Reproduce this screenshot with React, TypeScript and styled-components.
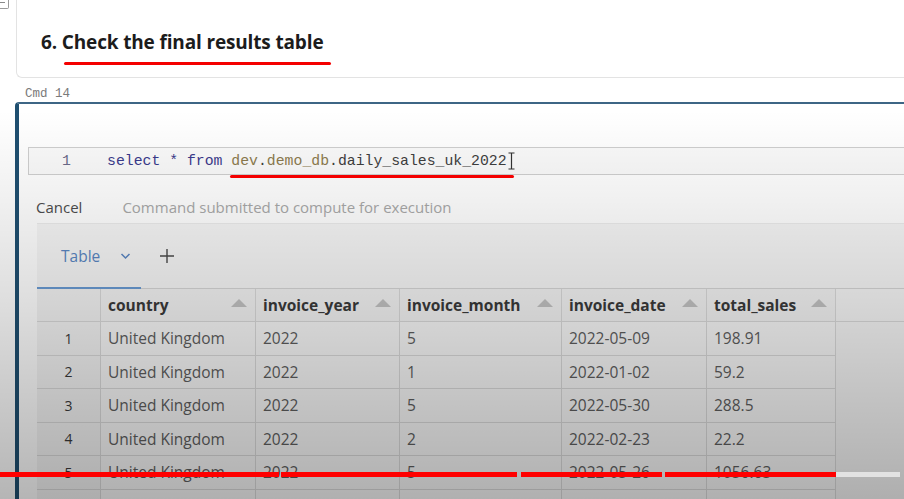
import React from "react";
import styled, { createGlobalStyle } from "styled-components";

const Global = createGlobalStyle`
  html, body { margin: 0; padding: 0; background: #ffffff; }
  body { width: 904px; height: 499px; overflow: hidden; font-family: "Open Sans", "Noto Sans", sans-serif; }
`;

const Page = styled.div`
  position: relative;
  width: 904px;
  height: 499px;
  overflow: hidden;
  background: #ffffff;
`;

const TopRow = styled.div`
  display: flex;
  height: 78px;
`;

const Gutter = styled.div`
  width: 16px;
  flex: none;
`;

const CollapseBox = styled.div`
  margin-top: -5px;
  width: 8px;
  height: 12px;
  border: 1px solid #9a9a9a;
  border-left: none;
  border-radius: 0 2px 2px 0;
  display: flex;
  align-items: center;
  &::after {
    content: "";
    display: block;
    width: 5px;
    height: 1px;
    background: #8a8a8a;
  }
`;

const MarkdownCell = styled.div`
  flex: 1;
  border: 1px solid #e3e3e3;
  border-top: none;
  border-right: none;
  border-bottom-left-radius: 6px;
  padding: 29px 0 0 24px;
`;

const Heading = styled.h2`
  margin: 0;
  font-family: "Open Sans", sans-serif;
  font-weight: 700;
  font-size: 19px;
  letter-spacing: -0.15px;
  color: #1c1c1c;
`;

const CmdLabel = styled.div`
  height: 24px;
  padding-left: 25px;
  display: flex;
  align-items: flex-end;
  padding-bottom: 1px;
  box-sizing: border-box;
  font-family: "Liberation Mono", monospace;
  font-size: 12.5px;
  color: #7a7a7a;
`;

const CommandCell = styled.div`
  margin-left: 15px;
  border-left: 4px solid #1f4f70;
  border-top: 2px solid #3d6685;
  border-top-left-radius: 4px;
  height: 420px;
  display: flex;
  flex-direction: column;
`;

const Spacer = styled.div<{ h: number }>`
  height: ${(p) => p.h}px;
  flex: none;
`;

const CodeBox = styled.div`
  margin-left: 9px;
  height: 26px;
  border: 1px solid #cfcfcf;
  border-right: none;
  background: #fafafa;
  display: flex;
  align-items: center;
  font-family: "Liberation Mono", monospace;
  font-size: 14.8px;
`;

const LineNo = styled.span`
  width: 78px;
  text-align: right;
  padding-right: 36px;
  box-sizing: border-box;
  color: #6b6b8a;
  flex: none;
`;

const Kw = styled.span`
  color: #3a3a8c;
`;
const Ident = styled.span<{ tone?: "db" | "plain" }>`
  color: ${(p) => (p.tone === "db" ? "#8c7a4e" : "#3e3e3e")};
`;

const Cursor = styled.span`
  margin-left: 1px;
  display: flex;
  align-items: center;
`;

const StatusRow = styled.div`
  height: 48px;
  display: flex;
  align-items: flex-end;
  padding: 0 0 6px 17px;
  box-sizing: border-box;
  gap: 40px;
  font-family: "Open Sans", sans-serif;
  font-size: 15px;
`;

const Cancel = styled.span`
  color: #4d4d4d;
`;
const StatusText = styled.span`
  color: #a9a9a9;
`;

const Results = styled.div`
  margin-left: 18px;
  flex: 1;
  background: #f6f6f6;
  border-top: 1px solid #ececec;
  display: flex;
  flex-direction: column;
`;

const TabBar = styled.div`
  height: 64px;
  flex: none;
  display: flex;
  align-items: flex-end;
  border-bottom: 1px solid #d6d6d6;
`;

const Tab = styled.div`
  width: 104px;
  height: 64px;
  box-sizing: border-box;
  border-bottom: 2px solid #6a9bd3;
  margin-bottom: -1px;
  display: flex;
  align-items: center;
  padding-left: 24px;
  gap: 20px;
  font-family: "Open Sans", sans-serif;
  font-size: 15.5px;
  color: #5a86c2;
`;

const PlusBtn = styled.div`
  height: 64px;
  display: flex;
  align-items: center;
  padding-left: 19px;
`;

const Grid = styled.div`
  display: grid;
  grid-template-columns: 64px 155px 144px 162px 145px 129px 1fr;
  font-family: "Open Sans", sans-serif;
  font-size: 15.5px;
`;

const HeadCell = styled.div<{ last?: boolean }>`
  height: 33px;
  box-sizing: border-box;
  border-right: ${(p) => (p.last ? "none" : "1px solid #dadada")};
  border-bottom: 1px solid #dadada;
  background: ${(p) => (p.last ? "transparent" : "#f3f3f3")};
  display: flex;
  align-items: center;
  justify-content: space-between;
  padding: 0 8px 0 7px;
  font-weight: 700;
  color: #3a3a3a;
`;

const SortArrow = styled.span`
  width: 0;
  height: 0;
  border-left: 8px solid transparent;
  border-right: 8px solid transparent;
  border-bottom: 8px solid #c2c2c2;
  margin-top: -4px;
`;

const Cell = styled.div<{ idx?: boolean; last?: boolean }>`
  height: 33.5px;
  box-sizing: border-box;
  border-right: ${(p) => (p.last ? "none" : "1px solid #dadada")};
  border-bottom: ${(p) => (p.last ? "none" : "1px solid #dadada")};
  background: ${(p) => (p.last ? "transparent" : p.idx ? "#f4f4f4" : "#f8f8f8")};
  display: flex;
  align-items: center;
  justify-content: ${(p) => (p.idx ? "center" : "flex-start")};
  padding-left: ${(p) => (p.idx ? "0" : "7px")};
  color: ${(p) => (p.idx ? "#3a3a3a" : "#5e5e5e")};
  font-size: ${(p) => (p.idx ? "14px" : "15.5px")};
`;

const Shade = styled.div`
  position: absolute;
  inset: 0;
  pointer-events: none;
  background: linear-gradient(
    to bottom,
    rgba(0, 0, 0, 0) 0px,
    rgba(0, 0, 0, 0) 110px,
    rgba(0, 0, 0, 0.06) 200px,
    rgba(0, 0, 0, 0.13) 300px,
    rgba(0, 0, 0, 0.21) 400px,
    rgba(0, 0, 0, 0.29) 499px
  );
`;

const Ink = styled.div<{ x: number; y: number; w: number; t: number }>`
  position: absolute;
  left: ${(p) => p.x}px;
  top: ${(p) => p.y}px;
  width: ${(p) => p.w}px;
  height: ${(p) => p.t}px;
  background: #f40000;
  border-radius: 2px;
`;

const Progress = styled.div`
  position: absolute;
  left: 0;
  right: 0;
  top: 472px;
  height: 5px;
  display: flex;
`;

const ProgSeg = styled.div<{ w: number; played?: boolean }>`
  width: ${(p) => p.w}px;
  flex: none;
  height: 100%;
  background: ${(p) => (p.played ? "#ff0000" : "#e2e2e2")};
`;

const ProgGap = styled.div<{ w: number }>`
  width: ${(p) => p.w}px;
  flex: none;
`;

const cols = ["country", "invoice_year", "invoice_month", "invoice_date", "total_sales"];
const rows = [
  ["United Kingdom", "2022", "5", "2022-05-09", "198.91"],
  ["United Kingdom", "2022", "1", "2022-01-02", "59.2"],
  ["United Kingdom", "2022", "5", "2022-05-30", "288.5"],
  ["United Kingdom", "2022", "2", "2022-02-23", "22.2"],
  ["United Kingdom", "2022", "5", "2022-05-26", "1056.63"],
  ["", "", "", "", ""],
];

export default function App() {
  return (
    <Page>
      <Global />
      <TopRow>
        <Gutter>
          <CollapseBox />
        </Gutter>
        <MarkdownCell>
          <Heading>6. Check the final results table</Heading>
        </MarkdownCell>
      </TopRow>
      <CmdLabel>Cmd 14</CmdLabel>
      <CommandCell>
        <Spacer h={43} />
        <CodeBox>
          <LineNo>1</LineNo>
          <Kw>select * from&nbsp;</Kw>
          <Ident tone="db">dev</Ident>
          <Ident>.</Ident>
          <Ident tone="db">demo_db</Ident>
          <Ident>.daily_sales_uk_2022</Ident>
          <Cursor>
            <svg width="7" height="18" viewBox="0 0 7 18">
              <path d="M0.5 1 H6.5 M3.5 1 V17 M0.5 17 H6.5" fill="none" stroke="#333" strokeWidth="1.2" />
            </svg>
          </Cursor>
        </CodeBox>
        <StatusRow>
          <Cancel>Cancel</Cancel>
          <StatusText>Command submitted to compute for execution</StatusText>
        </StatusRow>
        <Results>
          <TabBar>
            <Tab>
              Table
              <svg width="11" height="8" viewBox="0 0 11 8">
                <path d="M1.5 2 L5.5 6 L9.5 2" fill="none" stroke="#5a86c2" strokeWidth="1.5" />
              </svg>
            </Tab>
            <PlusBtn>
              <svg width="14" height="14" viewBox="0 0 14 14">
                <path d="M7 0 V14 M0 7 H14" stroke="#4a4a4a" strokeWidth="1.4" />
              </svg>
            </PlusBtn>
          </TabBar>
          <Grid>
            <HeadCell />
            {cols.map((c) => (
              <HeadCell key={c}>
                {c}
                <SortArrow />
              </HeadCell>
            ))}
            <HeadCell last />
            {rows.map((r, i) => (
              <React.Fragment key={i}>
                <Cell idx>{r[0] ? i + 1 : ""}</Cell>
                {r.map((v, j) => (
                  <Cell key={j}>{v}</Cell>
                ))}
                <Cell last />
              </React.Fragment>
            ))}
          </Grid>
        </Results>
      </CommandCell>
      <Shade />
      <Ink x={64} y={62} w={267} t={3} />
      <Ink x={230} y={175} w={284} t={3} />
      <Progress>
        <ProgSeg w={279} played />
        <ProgGap w={2} />
        <ProgSeg w={236} played />
        <ProgGap w={4} />
        <ProgSeg w={141} played />
        <ProgGap w={3} />
        <ProgSeg w={171} played />
        <ProgSeg w={64} />
      </Progress>
    </Page>
  );
}
